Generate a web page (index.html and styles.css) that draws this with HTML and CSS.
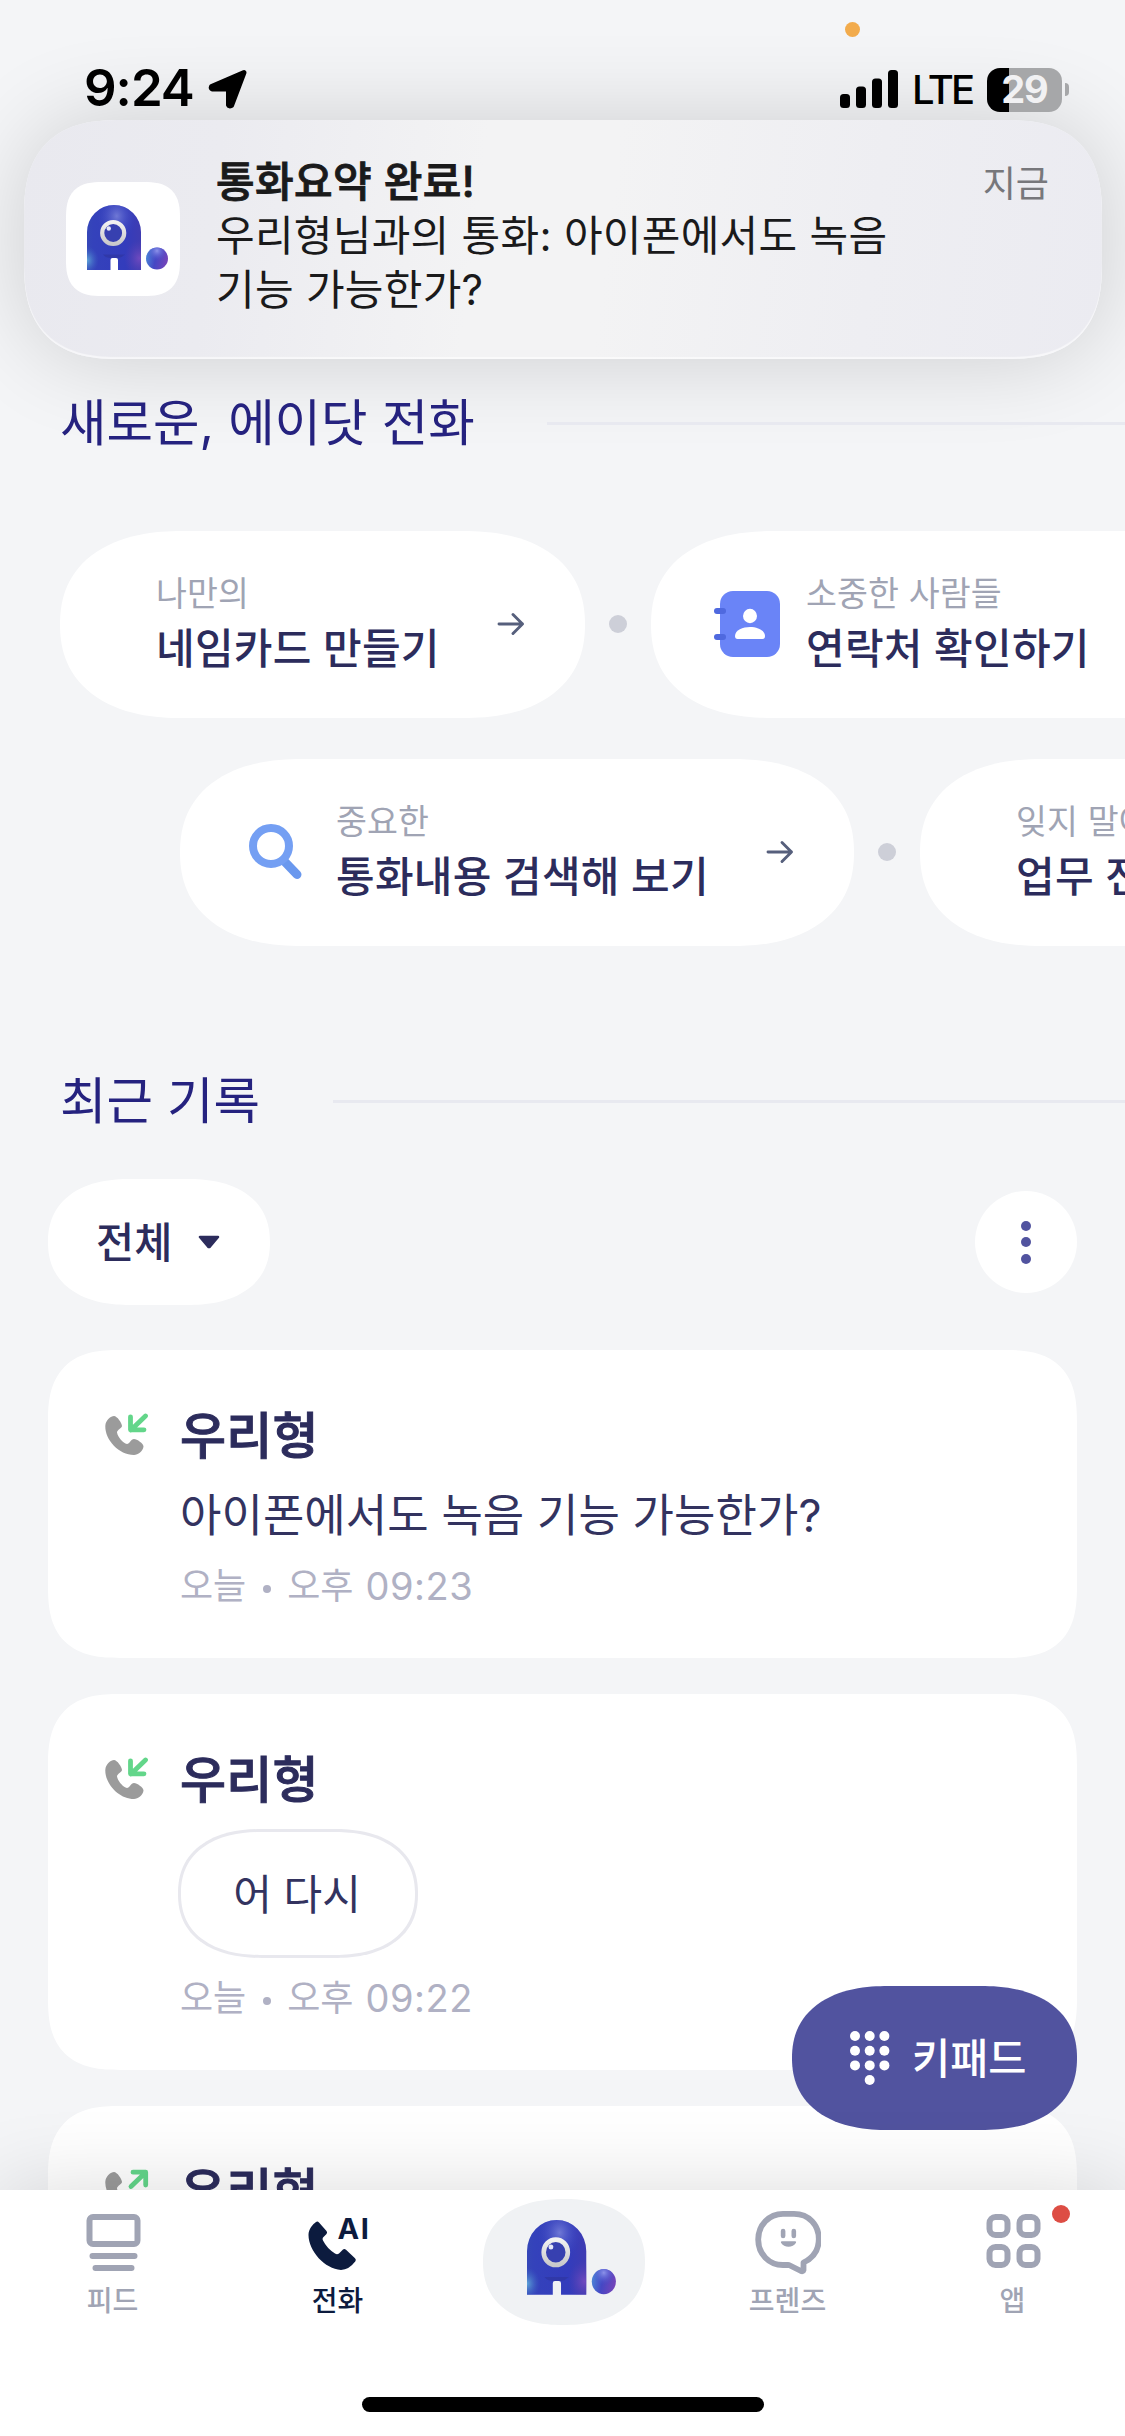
FILE: index.html
```html
<!DOCTYPE html>
<html lang="ko">
<head>
<meta charset="utf-8">
<title>전화</title>
<link rel="stylesheet" href="styles.css">
</head>
<body>
<svg class="defs" width="0" height="0" aria-hidden="true">
  <defs>
    <linearGradient id="body-fill" x1="0" y1="0" x2="1" y2="0">
      <stop offset="0" stop-color="#3547b8"/><stop offset=".12" stop-color="#3442bb"/>
      <stop offset=".7" stop-color="#333cbc"/><stop offset="1" stop-color="#3f3cb2"/>
    </linearGradient>
    <radialGradient id="body-shine" cx=".55" cy=".17" r=".38">
      <stop offset="0" stop-color="#7a83da" stop-opacity=".85"/><stop offset="1" stop-color="#3540bd" stop-opacity="0"/>
    </radialGradient>
    <radialGradient id="body-glow" cx=".97" cy=".82" r=".28">
      <stop offset="0" stop-color="#8550c4" stop-opacity=".7"/><stop offset="1" stop-color="#5a40b4" stop-opacity="0"/>
    </radialGradient>
    <radialGradient id="body-edge" cx="0" cy=".85" r=".22">
      <stop offset="0" stop-color="#63b0dc" stop-opacity=".9"/><stop offset="1" stop-color="#3f66c4" stop-opacity="0"/>
    </radialGradient>
    <linearGradient id="ring-fill" x1="0" y1="0" x2="0" y2="1">
      <stop offset="0" stop-color="#f2f2f2"/><stop offset="1" stop-color="#c9c9cb"/>
    </linearGradient>
    <linearGradient id="ball-fill" x1="0" y1=".6" x2="1" y2=".8">
      <stop offset="0" stop-color="#4a7fd6"/><stop offset=".4" stop-color="#4547c4"/><stop offset="1" stop-color="#7a44b8"/>
    </linearGradient>
    <radialGradient id="ball-shine" cx=".5" cy=".15" r=".5">
      <stop offset="0" stop-color="#8d93ea"/><stop offset="1" stop-color="#4048c8" stop-opacity="0"/>
    </radialGradient>
    <path id="mascot-body" d="M0 65V27a27 27 0 0 1 54 0v38H31V55q0-2-2-2h-3.500q-2 0-2 2v10z"/>
    <symbol id="mascot" viewBox="0 0 82 66" preserveAspectRatio="none">
      <use href="#mascot-body" fill="url(#body-fill)"/>
      <use href="#mascot-body" fill="url(#body-shine)"/>
      <use href="#mascot-body" fill="url(#body-edge)"/>
      <use href="#mascot-body" fill="url(#body-glow)"/>
      <path d="M16 49.500h22q-3 3-7 3.500h-8q-5-.5-7-3.500z" fill="#2c3092" opacity=".45"/>
      <circle cx="26.200" cy="28" r="11" fill="#3740b0" stroke="url(#ring-fill)" stroke-width="4.200"/>
      <circle cx="21.800" cy="23.500" r="2.200" fill="#e4e6fa"/>
      <circle cx="70" cy="53.500" r="11" fill="url(#ball-fill)"/>
      <circle cx="70" cy="53.500" r="11" fill="url(#ball-shine)"/>
    </symbol>
    <symbol id="arrow" viewBox="0 0 28 24">
      <path d="M2 12h23.500M16 2.500l9.500 9.500-9.500 9.500" fill="none" stroke="#565f7c" stroke-width="2.900" stroke-linecap="round" stroke-linejoin="round"/>
    </symbol>
    <symbol id="handset" viewBox="0 0 44 44">
      <path d="M.3 13C.5 7 6 3 9 3c3 0 8 7 8 10 0 2-5 4-5 6.500 1 5 6 10.500 10 11.500 2.500 0 4-5 7-5 3 0 9.500 4.500 9.500 7.500C38 38 33 42 29 42 14 42 0 27 .3 13z" fill="#9b9b9b"/>
    </symbol>
  </defs>
</svg>

<div class="screen">
  <div class="page">
    <header class="status">
      <span class="clock">9:24</span>
      <svg class="location" viewBox="0 0 40 40"><path d="M36 3.500 23.500 36.500 Q21 37.500 20.500 36V21.500Q20.500 20 19 20H4.500Q2.500 19.500 3.500 17.500z" stroke="#000" stroke-width="5" stroke-linejoin="round"/></svg>
      <svg class="signal" viewBox="0 0 58 38"><rect y="24" width="10" height="14" rx="3.500"/><rect x="16" y="16.500" width="10" height="21.500" rx="3.500"/><rect x="32" y="8.500" width="10" height="29.500" rx="3.500"/><rect x="48" width="10" height="38" rx="3.500"/></svg>
      <span class="network">LTE</span>
      <div class="battery"><span>29</span></div>
      <i class="battery-nub"></i>
      <i class="mic-dot"></i>
    </header>

    <article class="notice">
      <div class="notice-icon"><svg width="82" height="66"><use href="#mascot"/></svg></div>
      <div class="notice-text">
        <strong>통화요약 완료!</strong>
        <p>우리형님과의 통화: 아이폰에서도 녹음<br>기능 가능한가?</p>
      </div>
      <time>지금</time>
    </article>

    <div class="heading first"><h2>새로운, 에이닷 전화</h2><hr></div>

    <div class="shortcuts">
      <a class="pill plain w1"><span><small>나만의</small><b>네임카드 만들기</b></span><svg class="go"><use href="#arrow"/></svg></a>
      <i class="dot"></i>
      <a class="pill contacts"><svg width="66" height="66" viewBox="0 0 66 66"><rect x="6" width="60" height="66" rx="13" fill="#6a84f7"/><rect y="17" width="12" height="6" rx="3" fill="#4f69df"/><rect y="43" width="12" height="6" rx="3" fill="#4f69df"/><ellipse cx="36" cy="25" rx="7" ry="7.200" fill="#fff"/><path d="M21 45c0-6 8-9 15-9s15 3 15 9q0 3-2.500 3h-25q-2.500 0-2.500-3z" fill="#fff"/></svg><span><small>소중한 사람들</small><b>연락처 확인하기</b></span></a>
    </div>
    <div class="shortcuts second">
      <a class="pill search"><svg width="54" height="56" viewBox="0 0 54 56"><path d="M36 38l12 12.500" stroke="#6a98ee" stroke-width="9" stroke-linecap="round"/><circle cx="22" cy="22" r="18" fill="none" stroke="#749ff3" stroke-width="8"/></svg><span><small>중요한</small><b>통화내용 검색해 보기</b></span><svg class="go"><use href="#arrow"/></svg></a>
      <i class="dot"></i>
      <a class="pill plain w2"><span><small>잊지 말아야 할</small><b>업무 전화</b></span></a>
    </div>

    <div class="heading recent"><h2>최근 기록</h2><hr></div>

    <div class="filters">
      <button class="filter"><span>전체</span><svg width="22" height="14" viewBox="0 0 22 14"><path d="M2 2h18l-8 9.500q-1 1-2 0z" fill="#2c2c5c" stroke="#2c2c5c" stroke-width="2.500" stroke-linejoin="round"/></svg></button>
      <button class="more"><i></i><i></i><i></i></button>
    </div>

    <section class="call">
      <svg class="call-icon"><use href="#handset"/><path d="M40.500 3 26 17M25.500 3.800v13H39" fill="none" stroke="#63d68a" stroke-width="4.800" stroke-linecap="round" stroke-linejoin="round"/></svg>
      <div><h3>우리형</h3><p class="summary">아이폰에서도 녹음 기능 가능한가?</p><p class="when">오늘 <i></i> 오후 <em>09:23</em></p></div>
    </section>
    <section class="call">
      <svg class="call-icon"><use href="#handset"/><path d="M40.500 3 26 17M25.500 3.800v13H39" fill="none" stroke="#63d68a" stroke-width="4.800" stroke-linecap="round" stroke-linejoin="round"/></svg>
      <div><h3>우리형</h3><span class="tag">어 다시</span><p class="when">오늘 <i></i> 오후 <em>09:22</em></p></div>
    </section>
    <section class="call">
      <svg class="call-icon"><use href="#handset"/><path d="M26 17.500 40 4M28 3.200h12.700V16" fill="none" stroke="#63d68a" stroke-width="4.800" stroke-linecap="round" stroke-linejoin="round"/></svg>
      <div><h3>우리형</h3></div>
    </section>
  </div>

  <button class="keypad">
    <svg width="40" height="54" viewBox="0 0 40 54" fill="#fff"><circle cx="5" cy="5" r="5"/><circle cx="19.700" cy="5" r="5"/><circle cx="34.400" cy="5" r="5"/><circle cx="5" cy="19.700" r="5"/><circle cx="19.700" cy="19.700" r="5"/><circle cx="34.400" cy="19.700" r="5"/><circle cx="5" cy="34.400" r="5"/><circle cx="19.700" cy="34.400" r="5"/><circle cx="34.400" cy="34.400" r="5"/><circle cx="19.700" cy="49" r="5"/></svg>
    <span>키패드</span>
  </button>

  <nav class="tabs">
    <a class="tab"><svg width="66" height="66" viewBox="0 0 66 66"><rect x="9.500" y="8" width="48" height="27" rx="3.500" fill="none" stroke="#a0a4b4" stroke-width="6"/><path d="M12.500 47h42M15.500 59h36" stroke="#a0a4b4" stroke-width="6" stroke-linecap="round"/></svg>피드</a>
    <a class="tab active"><svg width="66" height="66" viewBox="0 0 66 66" fill="#0c1b3e"><path d="M3.500 26C3.500 20 8 15 11 13q1.500-1 3 .5l7.500 8.500q1.200 1.500 0 3L18 28.500q-1 1.500 0 3 4 8 12 13 2 1.500 4 0l4-4q1.500-1 3 .3l9 8.500q1.500 1.500.4 3-6.400 8.500-14.400 8.700C20 60 3.500 42 3.500 26z"/><text x="32.500" y="30" textLength="31.500">AI</text></svg>전화</a>
    <a class="tab-home"><svg width="90" height="76" viewBox="0 0 90 76"><use href="#mascot" width="90" height="76"/></svg></a>
    <a class="tab"><svg width="66" height="66" viewBox="0 0 66 66" fill="#a0a4b4"><path d="M28 4.800h11C54 4.800 63.800 16 63.800 30c0 11-5.800 19-15.300 23.500v7.500q-.5 1.800-2.500 1L35 56.500q-1-.5-2-.5h-5C14 56 3.200 45 3.200 30.500S14 4.800 28 4.800z" fill="none" stroke="#a0a4b4" stroke-width="5.800" stroke-linejoin="round"/><rect x="25.800" y="19.700" width="4.600" height="9.600" rx="2.300"/><rect x="36.500" y="19.700" width="4.600" height="9.600" rx="2.300"/><path d="M26.800 32.300h13.400q1.400 0 .8 1.500c-3 5.400-12 5.400-15 0q-.6-1.500.8-1.500z"/></svg>프렌즈</a>
    <a class="tab"><svg width="66" height="66" viewBox="0 0 66 66" fill="none" stroke="#a0a4b4" stroke-width="6"><rect x="9.500" y="8" width="18" height="18" rx="6"/><rect x="39.500" y="8" width="18" height="18" rx="6"/><rect x="9.500" y="38" width="18" height="18" rx="6"/><rect x="39.500" y="38" width="18" height="18" rx="6"/></svg>앱<i class="badge"></i></a>
    <i class="home-bar"></i>
  </nav>
</div>
</body>
</html>
```
FILE: styles.css
```css
* { box-sizing: border-box; margin: 0; padding: 0; }
body { font-family: Inter, "Noto Sans CJK KR", sans-serif; background: #f4f5f7; color: #2c2c5c; }
.defs { position: absolute; }
svg { display: block; flex: none; }
i, em { font-style: normal; }
button { border: 0; font: inherit; color: inherit; }
span, h2, h3, p, b, small { white-space: nowrap; }

.screen { position: relative; width: 1125px; height: 2436px; overflow: hidden; display: flex; flex-direction: column; background: #f4f5f7; }
.page { height: 2190px; flex: none; overflow: hidden; }

.status { position: relative; z-index: 1; height: 120px; padding: 57px 56px 0 84px; display: flex; align-items: flex-start; color: #000; }
.clock { width: 124px; font-size: 51px; font-weight: 600; line-height: 61px; letter-spacing: -1px; }
.location { width: 40px; height: 40px; margin-top: 12px; }
.signal { width: 58px; height: 38px; margin: 13px 14px 0 auto; }
.network { width: 75px; font-size: 40px; font-weight: 500; line-height: 48px; margin-top: 9px; letter-spacing: -3px; }
.battery { width: 75px; height: 44px; margin-top: 11px; border-radius: 13px; background: linear-gradient(90deg, #000 22px, #a6a7a9 22px); color: #f1f1f3; font-size: 38px; font-weight: 700; line-height: 43px; text-align: center; letter-spacing: -1px; }
.battery-nub { width: 4px; height: 13px; margin: 26px 0 0 3px; border-radius: 0 4px 4px 0; background: #a6a7a9; }
.mic-dot { position: absolute; left: 845px; top: 22px; width: 15px; height: 15px; border-radius: 50%; background: #f2ab4c; }

.notice { height: 239px; margin: 0 23px 0 24px; padding: 35px 53px 0 42px; display: flex; border-radius: 84px / 78px; background: linear-gradient(97deg, #e9e9ef 0, #ebebf0 18%, #f3f3f4 42%, #f3f3f4 54%, #eeeef2 78%, #ebebf1 100%); box-shadow: 0 0 90px rgba(0, 0, 0, .16), inset 0 -2px 1px rgba(255, 255, 255, .6); color: #1a1a1b; }
.notice-icon { width: 114px; height: 114px; margin-top: 27px; padding: 23px 0 0 21px; border-radius: 27px; background: #fff; }
.notice-text { margin-left: 36px; font-size: 42px; line-height: 54px; letter-spacing: .28px; }
.notice-text strong { display: block; font-weight: 500; letter-spacing: .4px; -webkit-text-stroke: .9px #1a1a1b; }
.notice time { margin-left: auto; font-size: 36px; line-height: 59px; color: #77777b; }

.heading { height: 60px; padding-left: 60px; display: flex; align-items: center; }
.heading.first { margin-top: 34px; }
.heading.recent { margin-top: 124px; padding-top: 1px; }
.heading h2 { font-size: 50.500px; line-height: 60px; font-weight: 400; color: #25227f; }
.heading hr { flex: 1; height: 3px; margin-top: 1px; border: 0; background: #e8e9f0; }
.heading.first h2 { width: 487px; }
.heading.recent h2 { width: 273px; }

.shortcuts { margin-top: 78px; padding-left: 60px; display: flex; align-items: center; gap: 24px; }
.shortcuts.second { margin-top: 41px; padding-left: 180px; }
.pill { flex: none; height: 187px; padding: 0 60px 1px 0; display: flex; align-items: center; border-radius: 104px / 93.500px; background: #fff; }
.pill.plain { padding-left: 96px; }
.pill.w1 { width: 525px; }
.pill.w2 { width: 500px; }
.pill.contacts { width: 590px; padding-left: 63px; }
.pill.contacts span { margin-left: 26px; }
.pill.search { width: 674px; padding-left: 69px; }
.pill.search span { margin-left: 33px; }
.pill span { padding-top: 1px; }
.pill small { display: block; margin-bottom: 5px; font-size: 33.600px; line-height: 44px; letter-spacing: .15px; color: #a0a4b4; }
.pill b { display: block; font-size: 42px; line-height: 56px; font-weight: 500; letter-spacing: .25px; }
.go { width: 28px; height: 24px; margin-left: auto; }
.dot { flex: none; width: 18px; height: 18px; margin-bottom: 1px; border-radius: 50%; background: #cdcfd8; }

.filters { margin-top: 49px; padding: 0 48px; display: flex; justify-content: space-between; align-items: center; }
.filter { width: 222px; height: 126px; padding-left: 48px; display: flex; align-items: center; gap: 26px; border-radius: 70px / 63px; background: #fff; font-size: 41.500px; font-weight: 500; }
.filter span { padding-bottom: 4px; }
.more { width: 102px; height: 102px; display: flex; flex-direction: column; align-items: center; justify-content: center; gap: 6.500px; border-radius: 50%; background: #fff; }
.more i { width: 10px; height: 10px; border-radius: 50%; background: #51539f; }

.call { margin: 36px 48px 0; padding: 54px 0 50px 57px; display: flex; border-radius: 60px / 56px; background: #fff; }
.filters + .call { margin-top: 45px; }
.call-icon { width: 44px; height: 44px; margin: 9px 31px 0 0; }
.call h3 { font-size: 50px; line-height: 64px; font-weight: 500; letter-spacing: .3px; -webkit-text-stroke: 1px #2c2c5c; }
.summary { margin-top: 20px; font-size: 45px; line-height: 56px; letter-spacing: .05px; color: #33335f; }
.when { margin-top: 20px; display: flex; align-items: center; font-size: 36px; line-height: 44px; color: #b0b1c4; }
.when i { width: 8px; height: 8px; margin: 5px 16.500px 0; border-radius: 50%; background: #b0b1c4; }
.when em { margin-left: 12px; font-size: 38px; letter-spacing: .5px; }
.tag { width: 240px; height: 129px; margin: 17px 0 0 -2px; padding: 0 2px 5px 0; display: flex; align-items: center; justify-content: center; border: 3px solid #e8e8ee; border-radius: 76px / 64px; font-size: 42px; color: #33335f; }
.tag + .when { margin-top: 18px; }

.keypad { position: absolute; left: 792px; top: 1986px; width: 285px; height: 144px; padding-left: 58px; display: flex; align-items: center; gap: 22px; border-radius: 84px / 72px; background: #51539f; color: #fff; font-size: 41.500px; font-weight: 500; }
.keypad span { padding-bottom: 4px; }

.tabs { position: relative; flex: 1; display: grid; grid-template-columns: repeat(5, 1fr); align-items: start; background: #fff; box-shadow: 0 0 80px rgba(0, 0, 0, .14); }
.tab { position: relative; padding-top: 19px; display: flex; flex-direction: column; align-items: center; gap: 8px; font-size: 28px; line-height: 36px; font-weight: 500; color: #a0a4b4; }
.tab.active { color: #0c1b3e; }
.tab text { font: 700 29px Inter, sans-serif; }
.tab-home { justify-self: center; width: 162px; height: 126px; margin: 9px 0 0 2px; padding: 21px 0 0 44px; border-radius: 74px / 63px; background: #f0f2f4; }
.badge { position: absolute; left: 152px; top: 15px; width: 18px; height: 18px; border-radius: 50%; background: #dd4d44; }
.home-bar { position: absolute; left: 362px; top: 207px; width: 402px; height: 15px; border-radius: 8px; background: #000; }

/* Continuous-curvature corners where the browser can draw them */
@supports (corner-shape: superellipse(1.2)) {
  .pill { border-radius: 122px / 93.500px; corner-shape: superellipse(1.2); }
  .filter { border-radius: 82px / 63px; corner-shape: superellipse(1.2); }
  .keypad { border-radius: 96px / 72px; corner-shape: superellipse(1.2); }
  .tag { border-radius: 84px / 64px; corner-shape: superellipse(1.2); }
  .tab-home { border-radius: 81px / 63px; corner-shape: superellipse(1.2); }
  .call { border-radius: 72px; corner-shape: superellipse(1.4); }
  .notice { border-radius: 96px; corner-shape: superellipse(1.35); }
  .notice-icon { border-radius: 36px; corner-shape: superellipse(1.4); }
}
```
